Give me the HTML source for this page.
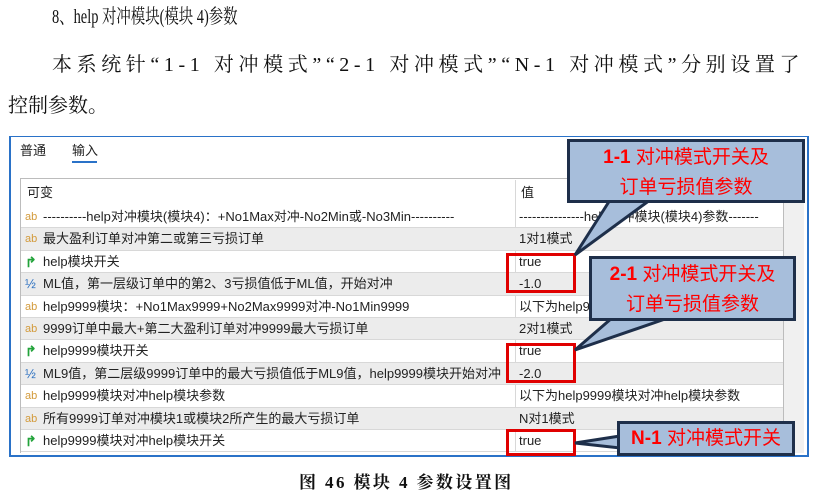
<!DOCTYPE html>
<html><head><meta charset="utf-8">
<style>
*{margin:0;padding:0;box-sizing:border-box}
body{width:817px;height:499px;background:#fff;position:relative;overflow:hidden;font-family:"Liberation Serif","Noto Serif CJK SC",serif;color:#111}
.a{position:absolute;white-space:nowrap}
.t{font-family:"Liberation Serif","Noto Serif CJK SC",serif;line-height:1.2}
.ui{font-family:"Liberation Sans","Noto Sans CJK SC",sans-serif;font-size:13px;color:#222;line-height:16px}
.row{position:absolute;left:21px;width:762px;height:22.4px;border-bottom:1px solid #d8d8d8}
.row.g{background:#ececec}
.row span{position:absolute;top:3px;white-space:nowrap;line-height:16px}
.ic{left:4px;font-size:11px;color:#d39a3a}
.ic.b{color:#2a6fc0;font-size:13px}
.ic.gr{color:#22a33a;font-size:14px;font-weight:bold}
.k{left:22px}
.v{left:498px}
.rb{position:absolute;border:3px solid #e00000}
.co{position:absolute;background:#a7bedb;border:3px solid #1e2f4a;color:#f00;font-family:"Liberation Sans","Noto Sans CJK SC",sans-serif;font-size:19px;text-align:center;line-height:30px}
.co b{font-weight:bold}
</style></head><body>
<div class="a t" style="left:52px;top:5px;font-size:20px;transform:scaleX(0.72);transform-origin:0 0">8、help 对冲模块(模块 4)参数</div>
<div class="a t" style="left:52px;top:53px;font-size:20px;letter-spacing:4.6px">本系统针“1-1 对冲模式”“2-1 对冲模式”“N-1 对冲模式”分别设置了</div>
<div class="a t" style="left:8px;top:94px;font-size:20px;">控制参数。</div>

<div class="a" style="left:9px;top:136px;width:800px;height:321px;border:2px solid #2a72c8;border-top:1px solid #2a72c8;background:#fff"></div>
<div class="a ui" style="left:20px;top:143px;">普通</div>
<div class="a ui" style="left:72px;top:143px;">输入</div>
<div class="a" style="left:72px;top:161px;width:25px;height:2px;background:#2a72c8"></div>

<div class="a" style="left:20px;top:178px;width:764px;height:275px;border:1px solid #bcbcbc;border-bottom:none"></div>
<div class="a ui" style="left:27px;top:185px;">可变</div>
<div class="a ui" style="left:521px;top:185px;">值</div>
<div class="a" style="left:515px;top:180px;width:1px;height:271px;background:#d8d8d8"></div>
<div class="a" style="left:784px;top:178px;width:20px;height:275px;background:#f0f0f0"></div>
<div class="a ui" style="left:788px;top:182px;color:#666">^</div>

<div class="row ui" style="top:206px"><span class="ic">ab</span><span class="k">----------help对冲模块(模块4)：+No1Max对冲-No2Min或-No3Min----------</span><span class="v">---------------help对冲模块(模块4)参数-------</span></div>
<div class="row ui g" style="top:228.4px"><span class="ic">ab</span><span class="k">最大盈利订单对冲第二或第三亏损订单</span><span class="v">1对1模式</span></div>
<div class="row ui" style="top:250.8px"><span class="ic gr">↱</span><span class="k">help模块开关</span><span class="v">true</span></div>
<div class="row ui g" style="top:273.2px"><span class="ic b">½</span><span class="k">ML值，第一层级订单中的第2、3亏损值低于ML值，开始对冲</span><span class="v">-1.0</span></div>
<div class="row ui" style="top:295.6px"><span class="ic">ab</span><span class="k">help9999模块：+No1Max9999+No2Max9999对冲-No1Min9999</span><span class="v">以下为help9999模块参数</span></div>
<div class="row ui g" style="top:318px"><span class="ic">ab</span><span class="k">9999订单中最大+第二大盈利订单对冲9999最大亏损订单</span><span class="v">2对1模式</span></div>
<div class="row ui" style="top:340.4px"><span class="ic gr">↱</span><span class="k">help9999模块开关</span><span class="v">true</span></div>
<div class="row ui g" style="top:362.8px"><span class="ic b">½</span><span class="k">ML9值，第二层级9999订单中的最大亏损值低于ML9值，help9999模块开始对冲</span><span class="v" style="background:#ececec;padding-right:200px;top:0;padding-top:3px;height:21px">-2.0</span></div>
<div class="row ui" style="top:385.2px"><span class="ic">ab</span><span class="k">help9999模块对冲help模块参数</span><span class="v">以下为help9999模块对冲help模块参数</span></div>
<div class="row ui g" style="top:407.6px"><span class="ic">ab</span><span class="k">所有9999订单对冲模块1或模块2所产生的最大亏损订单</span><span class="v">N对1模式</span></div>
<div class="row ui" style="top:430px"><span class="ic gr">↱</span><span class="k">help9999模块对冲help模块开关</span><span class="v">true</span></div>

<div class="rb" style="left:506px;top:253px;width:70px;height:40px"></div>
<div class="rb" style="left:506px;top:343px;width:70px;height:40px"></div>
<div class="rb" style="left:506px;top:429px;width:70px;height:27px"></div>

<svg class="a" style="left:0;top:0" width="817" height="499">
<polygon points="610,200 575,255 650,200" fill="#a7bedb" stroke="#1e2f4a" stroke-width="3"/>
<polygon points="612,318 575,350 668,318" fill="#a7bedb" stroke="#1e2f4a" stroke-width="3"/>
<polygon points="620,436 575,443 620,448" fill="#a7bedb" stroke="#1e2f4a" stroke-width="3"/>
</svg>
<div class="co" style="left:567px;top:139px;width:238px;height:64px;padding-top:1px"><b>1-1</b> 对冲模式开关及<br>订单亏损值参数</div>
<div class="co" style="left:589px;top:256px;width:207px;height:65px;padding-top:1px"><b>2-1</b> 对冲模式开关及<br>订单亏损值参数</div>
<div class="co" style="left:617px;top:421px;width:178px;height:35px;line-height:29px"><b>N-1</b> 对冲模式开关</div>

<div class="a" style="left:299px;top:473px;font-size:17px;font-weight:bold;font-family:'Liberation Serif','Noto Serif CJK SC',serif;letter-spacing:2.4px;line-height:1.2">图 46 模块 4 参数设置图</div>
</body></html>
